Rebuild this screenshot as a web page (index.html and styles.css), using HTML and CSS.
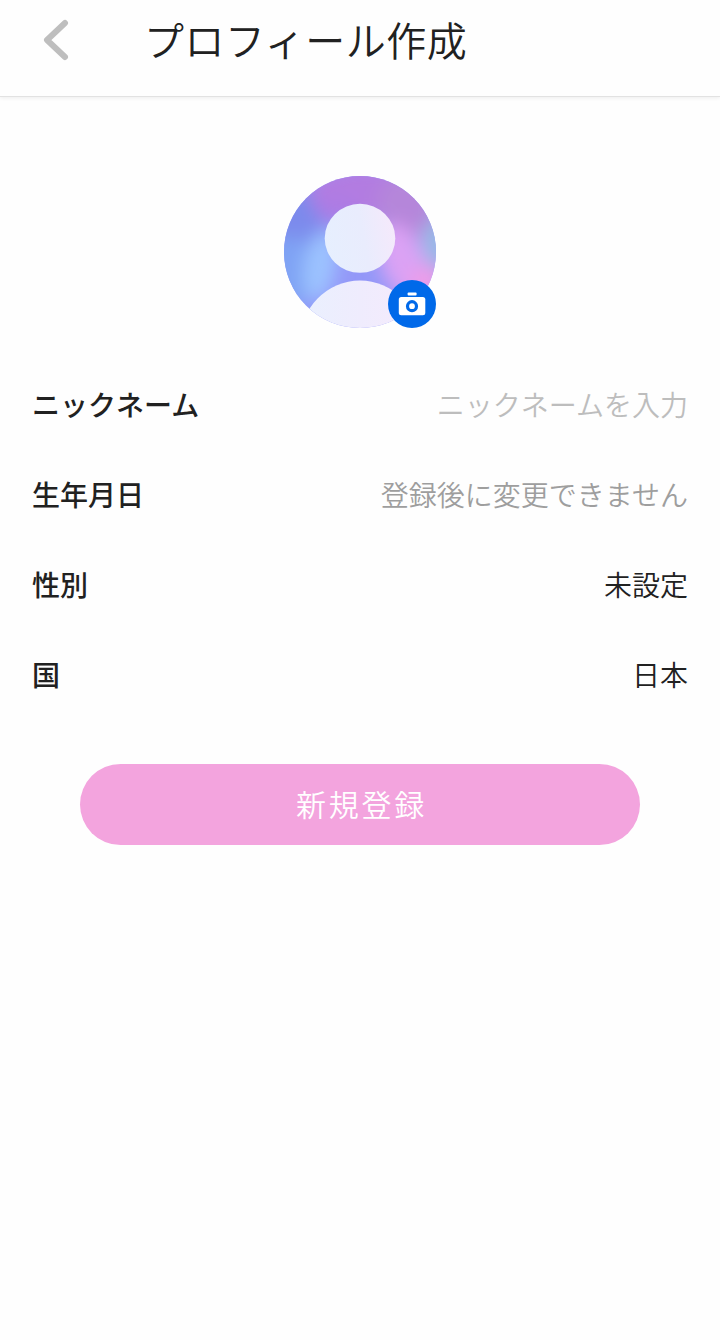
FILE: index.html
```html
<!DOCTYPE html>
<html lang="ja">
<head>
    <meta charset="UTF-8">
    <meta name="viewport" content="width=device-width, initial-scale=1.0">
    <title>プロフィール作成</title>
    <link rel="stylesheet" href="styles.css">
</head>
<body>
    <header class="header">
        <button type="button" class="btn-back" aria-label="戻る">
            <svg width="26" height="42" viewBox="0 0 26 42" fill="none">
                <path d="M22 4L4 21L22 38" stroke="#bebebe" stroke-width="6" stroke-linecap="round" stroke-linejoin="round"/>
            </svg>
        </button>
        <h1 class="header-title">プロフィール作成</h1>
    </header>

    <main class="container">
        <div class="avatar">
            <svg class="avatar-image" width="152" height="152" viewBox="0 0 152 152">
                <defs>
                    <clipPath id="circle"><circle cx="76" cy="76" r="76"/></clipPath>
                    <filter id="soft" x="-60%" y="-60%" width="220%" height="220%"><feGaussianBlur stdDeviation="9"/></filter>
                    <linearGradient id="skin" x1="0" y1=".6" x2="1" y2=".4">
                        <stop offset="0" stop-color="#e6effe"/>
                        <stop offset=".55" stop-color="#e9ecfd"/>
                        <stop offset="1" stop-color="#f5e9fb"/>
                    </linearGradient>
                    <linearGradient id="body" x1="0" y1="0" x2="1" y2="0">
                        <stop offset="0" stop-color="#e9f0fe"/>
                        <stop offset=".5" stop-color="#efecfd"/>
                        <stop offset="1" stop-color="#f6eafc"/>
                    </linearGradient>
                </defs>
                <g clip-path="url(#circle)">
                    <rect width="152" height="152" fill="#9398f8"/>
                    <g filter="url(#soft)">
                        <ellipse cx="14" cy="44" rx="30" ry="36" fill="#7c8aec"/>
                        <ellipse cx="4" cy="96" rx="30" ry="36" fill="#7fa3f4"/>
                        <ellipse cx="84" cy="16" rx="60" ry="28" fill="#b27be1"/>
                        <ellipse cx="52" cy="33" rx="20" ry="14" fill="#ad7ce4"/>
                        <ellipse cx="124" cy="30" rx="32" ry="34" fill="#b586da"/>
                        <ellipse cx="36" cy="90" rx="16" ry="36" fill="#9cc3ff" transform="rotate(10 36 90)"/>
                        <ellipse cx="156" cy="66" rx="18" ry="26" fill="#98b9e6"/>
                        <ellipse cx="119" cy="86" rx="22" ry="40" fill="#dba2f4" transform="rotate(-20 119 86)"/>
                        <ellipse cx="144" cy="106" rx="17" ry="16" fill="#ef9ce8"/>
                    </g>
                    <ellipse cx="76" cy="62.3" rx="35.3" ry="34.5" fill="url(#skin)"/>
                    <ellipse cx="76" cy="166" rx="60" ry="61.5" fill="url(#body)"/>
                </g>
            </svg>
            <button type="button" class="btn-camera" aria-label="写真を変更">
                <svg width="28" height="26" viewBox="0 0 28 26">
                    <rect x="9.6" y="1.6" width="9" height="3" rx="1" fill="#fff"/>
                    <rect x=".8" y="6" width="26.5" height="18.3" rx="2.5" fill="#fff"/>
                    <circle cx="14" cy="15.2" r="4.5" fill="#fff" stroke="#0069e9" stroke-width="3.2"/>
                </svg>
            </button>
        </div>

        <form class="profile-form">
            <div class="form-row">
                <span class="label">ニックネーム</span>
                <span class="value placeholder">ニックネームを入力</span>
            </div>
            <div class="form-row">
                <span class="label">生年月日</span>
                <span class="value notice">登録後に変更できません</span>
            </div>
            <div class="form-row">
                <span class="label">性別</span>
                <span class="value">未設定</span>
            </div>
            <div class="form-row">
                <span class="label">国</span>
                <span class="value">日本</span>
            </div>
            <button type="button" class="btn-submit">新規登録</button>
        </form>
    </main>
</body>
</html>
```

FILE: styles.css
```css
:root {
    --color-primary: #f3a4de;
    --color-accent: #0069e9;
    --color-text: #212121;
}

* {
    box-sizing: border-box;
}

body {
    margin: 0;
    min-height: 1340px;
    font-family: 'Noto Sans CJK JP', sans-serif;
    background-color: #fefefe;
    color: var(--color-text);
}

button {
    padding: 0;
    border: none;
    background: none;
    font-family: inherit;
    cursor: pointer;
}

.header {
    display: flex;
    align-items: flex-start;
    height: 97px;
    padding: 9px 0 0 43px;
    border-bottom: 1px solid #e2e2e2;
    box-shadow: 0 1px 4px rgba(0, 0, 0, 0.07);
}

.btn-back {
    width: 26px;
    height: 42px;
    margin-top: 10px;
}

.btn-back svg, .avatar svg {
    display: block;
}

.header-title {
    margin: 0 0 0 75px;
    font-size: 40px;
    font-weight: 350;
    line-height: 60px;
    letter-spacing: 0.5px;
}

.container {
    padding: 79px 32px 0;
}

.avatar {
    position: relative;
    width: 152px;
    height: 152px;
    margin: 0 auto;
}

.btn-camera {
    position: absolute;
    right: 0;
    bottom: 0;
    display: flex;
    align-items: center;
    justify-content: center;
    width: 48px;
    height: 48px;
    border-radius: 50%;
    background-color: var(--color-accent);
}

.profile-form {
    display: flex;
    flex-direction: column;
    padding-top: 31px;
}

.form-row {
    display: flex;
    justify-content: space-between;
    align-items: center;
    height: 90px;
    font-size: 28px;
    line-height: 42px;
}

.label {
    font-weight: 500;
}

.value {
    font-weight: 350;
}

.placeholder {
    color: #bdbdbd;
}

.notice {
    color: #9e9e9e;
}

.btn-submit {
    height: 81px;
    margin: 45px 48px 0;
    padding: 0 0 3px 3px;
    border-radius: 41px;
    background-color: var(--color-primary);
    color: #fff;
    font-size: 30px;
    font-weight: 350;
    letter-spacing: 2.8px;
}
```
